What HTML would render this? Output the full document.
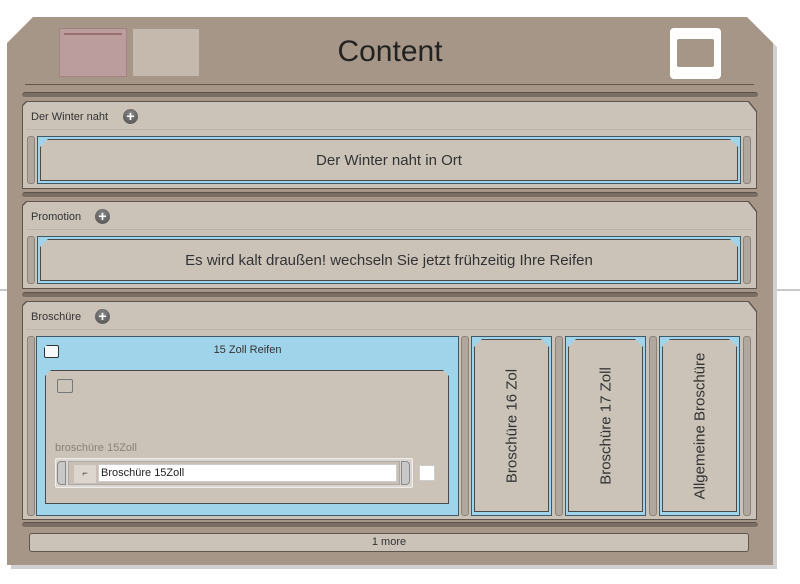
<!DOCTYPE html>
<html><head><meta charset="utf-8"><style>
*{margin:0;padding:0;box-sizing:border-box}
body{width:800px;height:584px;background:#fff;position:relative;overflow:hidden;font-family:"Liberation Sans",sans-serif;color:#333}
.a{position:absolute}
.bar{position:absolute;left:22px;width:736px;height:6px;background:#7a6d62;border-radius:3px;border-top:1px solid #5e534a;border-bottom:1px solid #a89a8c}
.sec{position:absolute;left:22px;width:735px;background:#5f554c;clip-path:polygon(0 4px,4px 0,calc(100% - 8px) 0,100% 10px,100% 100%,0 100%)}
.sec>.in{position:absolute;left:1px;top:1px;right:1px;bottom:1px;background:#cbc2b8;clip-path:polygon(0 4px,4px 0,calc(100% - 8px) 0,100% 10px,100% 100%,0 100%)}
.ht{position:absolute;left:9px;top:10px;font-size:11px;color:#333}
.hl{position:absolute;left:4px;right:4px;top:28px;height:1px;background:#bdb3a8}
.plus{position:absolute;width:15px;height:15px;border-radius:50%;background:radial-gradient(circle at 50% 35%,#8a8a8a,#4a4a4a);color:#fff;font-size:14px;font-weight:bold;line-height:15px;text-align:center}
.grip{position:absolute;width:8px;background:#b0a79e;border:1px solid #8c8278;border-radius:3px}
.blue{position:absolute;background:#a0d4ea;border:1px solid #3f5966}
.card{position:absolute;background:#cbc2b8;border:1px solid #4a4a4a;clip-path:polygon(0 8px,8px 0,calc(100% - 8px) 0,100% 8px,100% 100%,0 100%)}
.vt{position:absolute;left:50%;top:50%;transform:translate(-50%,-50%) rotate(-90deg);white-space:nowrap;font-size:15px;color:#333}
</style></head><body>
<div class="a" style="left:0;top:289px;width:800px;height:2px;background:#c8c8c8"></div>
<div class="a" style="left:11px;top:21px;width:766px;height:548px;background:#d0d0d0;clip-path:polygon(26px 0,calc(100% - 26px) 0,100% 26px,100% 100%,0 100%,0 26px)"></div>
<div class="a" style="left:7px;top:17px;width:766px;height:548px;background:#a69687;clip-path:polygon(26px 0,calc(100% - 26px) 0,100% 26px,100% 100%,0 100%,0 26px)"></div>
<div class="a" style="left:59px;top:28px;width:68px;height:49px;background:#bc9d9d;border:1px solid #a58282"></div>
<div class="a" style="left:64px;top:33px;width:58px;height:2px;background:#9a6f70"></div>
<div class="a" style="left:133px;top:29px;width:66px;height:47px;background:#c5b9ae"></div>
<div class="a" style="left:0;width:780px;top:35px;text-align:center;font-size:30px;color:#222">Content</div>
<div class="a" style="left:670px;top:28px;width:51px;height:51px;background:#fff;border-radius:4px"></div>
<div class="a" style="left:677px;top:39px;width:37px;height:28px;background:#a69687;border-radius:2px"></div>
<div class="a" style="left:25px;top:84px;width:729px;height:1px;background:#5f554c"></div>
<div class="bar" style="top:92px"></div>
<div class="bar" style="top:192px"></div>
<div class="bar" style="top:292px"></div>
<div class="bar" style="top:522px"></div>

<div class="sec" style="top:101px;height:88px"><div class="in"></div>
<div class="ht">Der Winter naht</div><div class="plus" style="left:101px;top:8px">+</div><div class="hl"></div>
<div class="grip" style="left:5px;top:35px;height:48px"></div>
<div class="blue" style="left:15px;top:35px;width:704px;height:48px"></div>
<div class="card" style="left:18px;top:38px;width:698px;height:42px"><div class="a" style="left:0;right:0;top:12px;text-align:center;font-size:15px">Der Winter naht in Ort</div></div>
<div class="grip" style="left:721px;top:35px;height:48px"></div>
</div>

<div class="sec" style="top:201px;height:88px"><div class="in"></div>
<div class="ht">Promotion</div><div class="plus" style="left:73px;top:8px">+</div><div class="hl"></div>
<div class="grip" style="left:5px;top:35px;height:48px"></div>
<div class="blue" style="left:15px;top:35px;width:704px;height:48px"></div>
<div class="card" style="left:18px;top:38px;width:698px;height:42px"><div class="a" style="left:0;right:0;top:12px;text-align:center;font-size:15px">Es wird kalt draußen! wechseln Sie jetzt frühzeitig Ihre Reifen</div></div>
<div class="grip" style="left:721px;top:35px;height:48px"></div>
</div>

<div class="sec" style="top:301px;height:219px"><div class="in"></div>
<div class="ht">Broschüre</div><div class="plus" style="left:73px;top:8px">+</div><div class="hl"></div>
<div class="grip" style="left:5px;top:35px;height:180px"></div>
<div class="blue" style="left:14px;top:35px;width:423px;height:180px"></div>
<div class="a" style="left:22px;top:44px;width:15px;height:13px;background:#f4f8fa;border:1px solid #333;border-radius:2px;clip-path:polygon(0 3px,3px 0,100% 0,100% 100%,0 100%)"></div>
<div class="a" style="left:14px;top:43px;width:423px;text-align:center;font-size:11px">15 Zoll Reifen</div>
<div class="card" style="left:23px;top:69px;width:404px;height:134px;clip-path:polygon(0 6px,6px 0,calc(100% - 6px) 0,100% 6px,100% 100%,0 100%)">
 <div class="a" style="left:11px;top:8px;width:16px;height:14px;border:1px solid #777;border-radius:2px"></div>
 <div class="a" style="left:9px;top:71px;font-size:11px;color:#8a8078">broschüre 15Zoll</div>
 <div class="a" style="left:9px;top:87px;width:358px;height:30px;background:#ddd6ce;border:1px solid #eee;border-radius:2px"></div>
 <div class="a" style="left:11px;top:90px;width:9px;height:24px;background:#c8c8c8;border:1px solid #888;border-radius:4px 0 0 4px"></div>
 <div class="a" style="left:355px;top:90px;width:9px;height:24px;background:#c8c8c8;border:1px solid #888;border-radius:0 4px 4px 0"></div>
 <div class="a" style="left:22px;top:90px;width:332px;height:24px;background:#c9bfb5;border:1px solid #aaa"></div>
 <div class="a" style="left:28px;top:94px;width:22px;height:18px;background:#ddd6ce;font-size:9px;text-align:center;line-height:16px">⌐</div>
 <div class="a" style="left:52px;top:93px;width:299px;height:18px;background:#fff;border:1px solid #ccc;font-size:11px;line-height:16px;padding-left:2px;color:#222">Broschüre 15Zoll</div>
 <div class="a" style="left:373px;top:94px;width:16px;height:16px;background:#fff;border:1px solid #ccc"></div>
</div>
<div class="grip" style="left:439px;top:35px;height:180px"></div>
<div class="blue" style="left:449px;top:35px;width:81px;height:180px"></div>
<div class="card" style="left:452px;top:38px;width:75px;height:173px"><div class="vt">Broschüre 16 Zol</div></div>
<div class="grip" style="left:533px;top:35px;height:180px"></div>
<div class="blue" style="left:543px;top:35px;width:81px;height:180px"></div>
<div class="card" style="left:546px;top:38px;width:75px;height:173px"><div class="vt">Broschüre 17 Zoll</div></div>
<div class="grip" style="left:627px;top:35px;height:180px"></div>
<div class="blue" style="left:637px;top:35px;width:81px;height:180px"></div>
<div class="card" style="left:640px;top:38px;width:75px;height:173px"><div class="vt">Allgemeine Broschüre</div></div>
<div class="grip" style="left:721px;top:35px;height:180px"></div>
</div>

<div class="a" style="left:29px;top:533px;width:720px;height:19px;background:#cbc2b8;border:1px solid #5f554c;border-radius:3px;font-size:11px;text-align:center;line-height:17px">1 more</div>
</body></html>
